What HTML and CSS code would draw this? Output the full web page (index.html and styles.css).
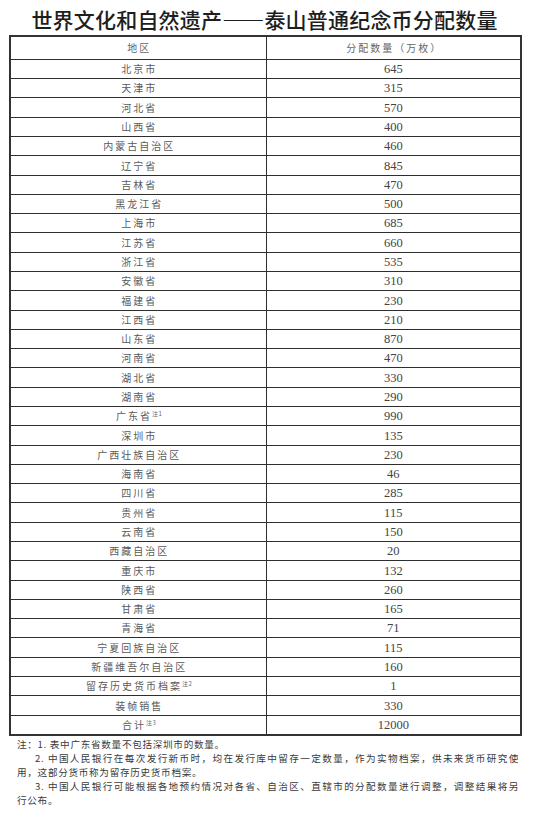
FILE: index.html
```html
<!DOCTYPE html>
<html lang="zh-CN">
<head>
<meta charset="utf-8">
<title>世界文化和自然遗产——泰山普通纪念币分配数量</title>
<link rel="stylesheet" href="styles.css">
</head>
<body>
<div class="doc">
  <h1 class="title">世界文化和自然遗产——泰山普通纪念币分配数量</h1>
  <table class="alloc">
    <colgroup><col class="c-region"><col class="c-qty"></colgroup>
    <thead>
      <tr class="head"><th>地区</th><th>分配数量（万枚）</th></tr>
    </thead>
    <tbody>
      <tr><td>北京市</td><td>645</td></tr>
      <tr><td>天津市</td><td>315</td></tr>
      <tr><td>河北省</td><td>570</td></tr>
      <tr><td>山西省</td><td>400</td></tr>
      <tr><td>内蒙古自治区</td><td>460</td></tr>
      <tr><td>辽宁省</td><td>845</td></tr>
      <tr><td>吉林省</td><td>470</td></tr>
      <tr><td>黑龙江省</td><td>500</td></tr>
      <tr><td>上海市</td><td>685</td></tr>
      <tr><td>江苏省</td><td>660</td></tr>
      <tr><td>浙江省</td><td>535</td></tr>
      <tr><td>安徽省</td><td>310</td></tr>
      <tr><td>福建省</td><td>230</td></tr>
      <tr><td>江西省</td><td>210</td></tr>
      <tr><td>山东省</td><td>870</td></tr>
      <tr><td>河南省</td><td>470</td></tr>
      <tr><td>湖北省</td><td>330</td></tr>
      <tr><td>湖南省</td><td>290</td></tr>
      <tr><td>广东省<sup>注1</sup></td><td>990</td></tr>
      <tr><td>深圳市</td><td>135</td></tr>
      <tr><td>广西壮族自治区</td><td>230</td></tr>
      <tr><td>海南省</td><td>46</td></tr>
      <tr><td>四川省</td><td>285</td></tr>
      <tr><td>贵州省</td><td>115</td></tr>
      <tr><td>云南省</td><td>150</td></tr>
      <tr><td>西藏自治区</td><td>20</td></tr>
      <tr><td>重庆市</td><td>132</td></tr>
      <tr><td>陕西省</td><td>260</td></tr>
      <tr><td>甘肃省</td><td>165</td></tr>
      <tr><td>青海省</td><td>71</td></tr>
      <tr><td>宁夏回族自治区</td><td>115</td></tr>
      <tr><td>新疆维吾尔自治区</td><td>160</td></tr>
      <tr><td>留存历史货币档案<sup>注2</sup></td><td>1</td></tr>
      <tr><td>装帧销售</td><td>330</td></tr>
      <tr><td>合计<sup>注3</sup></td><td>12000</td></tr>
    </tbody>
  </table>
  <div class="notes">
    <p class="note">
      <span class="ln">注：1. 表中广东省数量不包括深圳市的数量。</span>
    </p>
    <p class="note">
      <span class="ln indent just">2. 中国人民银行在每次发行新币时，均在发行库中留存一定数量，作为实物档案，供未来货币研究使</span>
      <span class="ln">用，这部分货币称为留存历史货币档案。</span>
    </p>
    <p class="note">
      <span class="ln indent just">3. 中国人民银行可能根据各地预约情况对各省、自治区、直辖市的分配数量进行调整，调整结果将另</span>
      <span class="ln">行公布。</span>
    </p>
  </div>
</div>
</body>
</html>
```
FILE: styles.css
```css
html, body {
  margin: 0;
  padding: 0;
  background: #ffffff;
}

.doc {
  width: 511px;
  margin-left: 9px;
  font-family: "Noto Sans CJK SC", "Noto Sans", sans-serif;
}

.title {
  margin: 0;
  padding-top: 3px;
  height: 32px;
  line-height: 32px;
  font-size: 21px;
  font-weight: 500;
  letter-spacing: 0.2px;
  color: #1e1e1e;
  text-align: center;
  white-space: nowrap;
}

.alloc {
  width: 511px;
  border-collapse: collapse;
  border: 2px solid #333;
  table-layout: fixed;
}

.c-region { width: 256px; }
.c-qty { width: 255px; }

.alloc th,
.alloc td {
  border: 1px solid #2e2e2e;
  padding: 0 0 0 2px;
  text-align: center;
  vertical-align: middle;
  height: 18px;
  line-height: 12px;
  font-weight: 400;
}

/* Word-style rows average about 19.3px: every 7 rows, two are a pixel taller */
.alloc tbody tr:nth-child(7n+3) td,
.alloc tbody tr:nth-child(7n+6) td {
  height: 19px;
}

.alloc tr.head th {
  height: 22px;
  font-size: 10px;
  letter-spacing: 2px;
  color: #666;
}

.alloc td:first-child {
  font-size: 10px;
  letter-spacing: 2px;
  color: #5a5a5a;
}

.alloc td:last-child {
  font-family: "Liberation Serif", "Times New Roman", serif;
  font-size: 12.5px;
  color: #444;
  letter-spacing: 0;
  padding-left: 0;
}

.alloc sup {
  font-size: 6px;
  letter-spacing: 0.5px;
  vertical-align: 4px;
  line-height: 0;
  color: #666;
}

.notes {
  width: 502px;
  margin-left: 8px;
  padding-top: 1px;
}

.note {
  margin: 0;
  font-size: 9.6px;
  line-height: 14px;
  letter-spacing: 0.7px;
  color: #3a3a3a;
}

.ln {
  display: block;
  white-space: nowrap;
}

.ln.indent {
  padding-left: 18px;
}

.ln.just {
  white-space: normal;
  text-align: justify;
  text-align-last: justify;
}
```
